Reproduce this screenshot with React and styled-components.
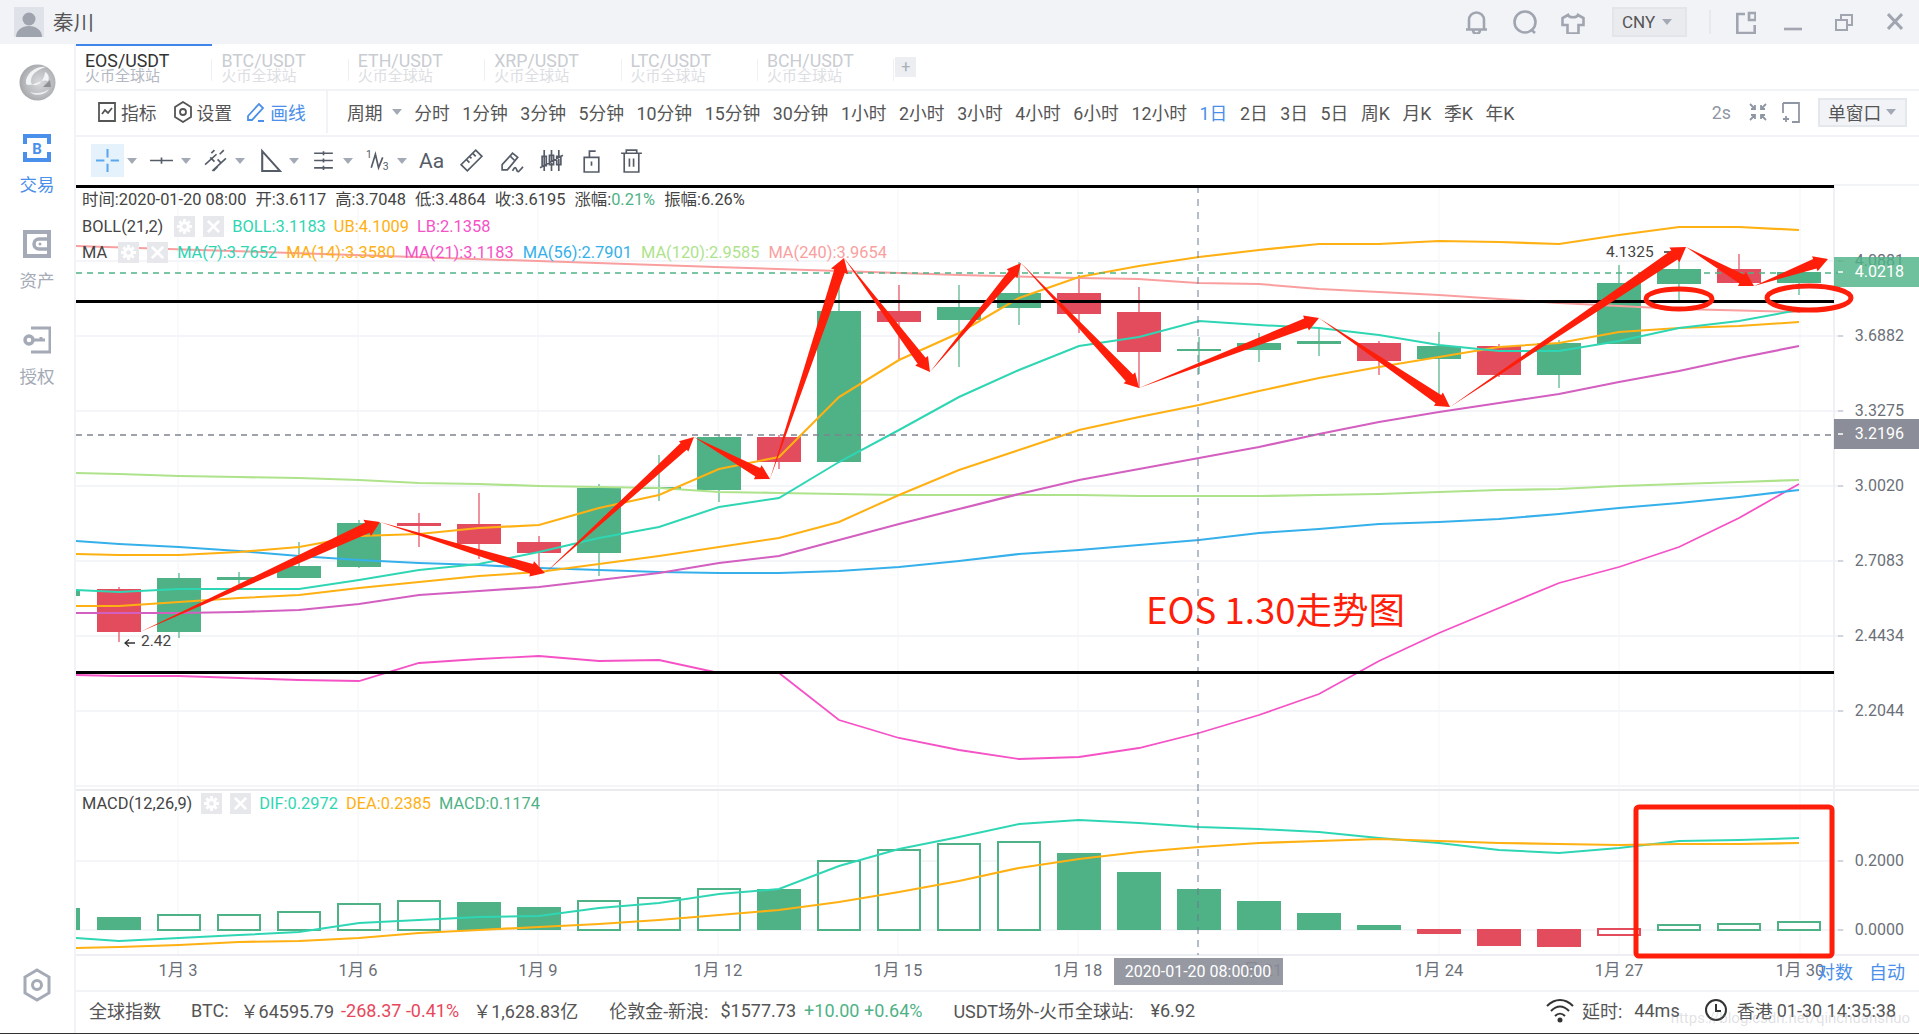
import React from 'react';
import styled, { createGlobalStyle } from 'styled-components';

const FONT = 'Roboto, "Noto Sans CJK SC", sans-serif';
const GREEN = '#4fb286';
const RED = '#e34c5d';
const TEAL = '#2fd6b4';
const ORANGE = '#ffb012';
const PINK = '#f552c6';
const PURPLE = '#d35fc0';
const SKY = '#36b0ea';
const LIME = '#aee38c';
const SALMON = '#fa9fa0';
const BLUE = '#4a8fea';
const ARROW = '#ff1e0a';

const GlobalStyle = createGlobalStyle`
  html, body { margin: 0; padding: 0; background: #fff; }
  body { font-family: ${FONT}; overflow: hidden; }
`;

const Shell = styled.div`
  width: 1919px;
  height: 1034px;
  display: flex;
  flex-direction: column;
  border-bottom: 1px solid #333;
  box-sizing: border-box;
  overflow: hidden;
  position: relative;
`;

/* title bar */
const TitleBar = styled.header`
  height: 44px;
  flex: none;
  background: #f1f3f7;
  display: flex;
  align-items: center;
  padding: 0 16px 0 14px;
  color: #a0a5b0;
`;
const Avatar = styled.div`
  width: 30px;
  height: 30px;
  background: #dfe2e8;
  display: flex;
  overflow: hidden;
`;
const UserName = styled.span`
  margin: -2px 0 0 9px;
  font-size: 20.5px;
  color: #555;
`;
const TitleRight = styled.div`
  margin-left: auto;
  display: flex;
  align-items: center;
`;
const TitleIcon = styled.svg`
  width: ${({ $w }) => $w}px;
  height: 24px;
  margin-left: ${({ $ml }) => $ml || 0}px;
  fill: none;
  stroke: currentColor;
  stroke-width: ${({ $sw }) => $sw || 2.6};
  display: block;
  flex: none;
`;
const CurrencySelect = styled.div`
  width: 75px;
  height: 30px;
  margin-left: 27px;
  box-sizing: border-box;
  background: #e9ebef;
  border: 2px solid #e3e5ea;
  display: flex;
  align-items: center;
  padding-left: 8px;
  font-size: 17px;
  color: #555;
`;
const Caret = styled.i`
  display: inline-block;
  flex: none;
  width: 0;
  height: 0;
  margin-left: ${({ $ml }) => $ml || 7}px;
  border-left: 5.5px solid transparent;
  border-right: 5.5px solid transparent;
  border-top: 6px solid #a3a9b5;
`;
const TitleDivider = styled.div`
  width: 2px;
  height: 24px;
  margin-left: 22px;
  background: #e6e8ed;
`;

/* body */
const Body = styled.div`
  flex: 1;
  min-height: 0;
  display: flex;
`;
const Sidebar = styled.nav`
  width: 74px;
  flex: none;
  border-right: 2px solid #f1f3f7;
  display: flex;
  flex-direction: column;
  align-items: center;
  padding-top: 20px;
  position: relative;
`;
const Globe = styled.svg`
  width: 37px;
  height: 37px;
  display: block;
  margin-bottom: 33px;
`;
const NavItem = styled.a`
  height: 96px;
  display: flex;
  flex-direction: column;
  align-items: center;
  font-size: 17.5px;
  line-height: 24px;
  color: ${({ $active }) => ($active ? BLUE : '#a4aab6')};
  svg {
    display: block;
    width: 28px;
    height: 28px;
    margin-bottom: 11px;
  }
`;
const SidebarFoot = styled.div`
  margin-top: auto;
  margin-bottom: 31px;
  color: #a4aab6;
  svg { display: block; width: 28px; height: 34px; }
`;

const Main = styled.main`
  flex: 1;
  min-width: 0;
  display: flex;
  flex-direction: column;
`;

/* tabs */
const TabBar = styled.div`
  height: 47px;
  flex: none;
  box-sizing: border-box;
  border-bottom: 2px solid #f1f3f7;
  display: flex;
  align-items: flex-start;
`;
const Tab = styled.div`
  width: 136.4px;
  height: 45px;
  box-sizing: border-box;
  padding: 6px 0 0 9px;
  border-top: 2px solid ${({ $active }) => ($active ? '#3f86ea' : 'transparent')};
  position: relative;
  &::after {
    content: '';
    position: absolute;
    right: 0;
    top: 13px;
    width: 1px;
    height: 22px;
    background: #f0f1f4;
  }
`;
const TabTitle = styled.div`
  font-size: 17.8px;
  line-height: 17px;
  color: ${({ $active }) => ($active ? '#333' : '#c9ccd1')};
`;
const TabSub = styled.div`
  font-size: 15px;
  line-height: 15px;
  color: ${({ $active }) => ($active ? '#b3b8c2' : '#dcdee2')};
`;
const AddTab = styled.div`
  width: 21px;
  height: 20px;
  margin: 13px 0 0 1px;
  background: #eceef2;
  color: #a9aeb8;
  font-size: 16px;
  line-height: 19px;
  text-align: center;
`;

/* period toolbar */
const Toolbar = styled.div`
  height: 46px;
  flex: none;
  box-sizing: border-box;
  border-bottom: 2px solid #f1f3f7;
  padding-bottom: 2px;
  display: flex;
  align-items: center;
  font-size: 17.8px;
  color: #555;
`;
const ToolGroup = styled.div`
  width: 252px;
  height: 100%;
  flex: none;
  box-sizing: border-box;
  border-right: 2px solid #f1f3f7;
  padding-left: 21px;
  display: flex;
  align-items: center;
`;
const ToolLabel = styled.span`
  display: flex;
  align-items: center;
  margin-right: ${({ $mr }) => $mr || 0}px;
  color: ${({ $active }) => ($active ? BLUE : '#555')};
  svg {
    width: 20px;
    height: 22px;
    margin-right: 4px;
    fill: none;
    stroke: currentColor;
    stroke-width: 1.8;
  }
`;
const Periods = styled.div`
  display: flex;
  align-items: center;
  gap: 12.55px;
  padding-left: 19px;
`;
const Period = styled.span`
  white-space: nowrap;
  color: ${({ $active }) => ($active ? BLUE : '#555')};
  display: flex;
  align-items: center;
`;
const ToolbarRight = styled.div`
  margin-left: auto;
  padding-right: 12px;
  display: flex;
  align-items: center;
  color: #8f96a3;
`;
const WindowSelect = styled.div`
  width: 89px;
  height: 29px;
  margin-left: 17px;
  box-sizing: border-box;
  background: #f1f3f7;
  border: 2px solid #e4e7ec;
  display: flex;
  align-items: center;
  padding-left: 8px;
  color: #555;
`;

/* draw toolbar */
const DrawBar = styled.div`
  height: 47px;
  flex: none;
  display: flex;
  align-items: center;
  gap: 8px;
  padding-left: 15px;
  color: #555c68;
`;
const DrawTool = styled.div`
  width: ${({ $caret }) => ($caret ? 46 : 32)}px;
  height: 33px;
  display: flex;
  align-items: center;
  font-size: 21px;
`;
const DrawIcon = styled.div`
  width: 33px;
  height: 33px;
  flex: none;
  display: flex;
  align-items: center;
  justify-content: center;
  background: ${({ $active }) => ($active ? '#e6f2fb' : 'transparent')};
  color: ${({ $active }) => ($active ? '#5aa7ee' : 'inherit')};
  svg {
    width: 25px;
    height: 25px;
    fill: none;
    stroke: currentColor;
    stroke-width: 1.6;
  }
`;

/* chart */
const ChartPane = styled.section`
  flex: 1;
  min-height: 0;
  position: relative;
`;
const ChartSvg = styled.svg`
  display: block;
  width: 1843px;
  height: 804px;
  font-family: ${FONT};
`;
const Legend = styled.div`
  position: absolute;
  left: 6px;
  top: ${({ $top }) => $top}px;
  display: flex;
  flex-direction: column;
  gap: ${({ $gap }) => $gap || 0}px;
`;
const LegendRow = styled.div`
  height: 21px;
  display: flex;
  align-items: center;
  font-size: 16.4px;
  line-height: 21px;
  color: #444;
  white-space: nowrap;
`;
const LegendValue = styled.span`
  color: ${({ $color }) => $color || 'inherit'};
  margin-left: ${({ $ml }) => $ml ?? 8}px;
`;
const LegendButton = styled.span`
  width: 21px;
  height: 21px;
  margin-left: ${({ $ml }) => $ml ?? 8}px;
  background: #e6e8ec;
  display: flex;
  align-items: center;
  justify-content: center;
  color: #fff;
  flex: none;
  svg { width: 15px; height: 15px; fill: none; stroke: currentColor; stroke-width: 3; }
`;

/* footer */
const Footer = styled.footer`
  height: 43px;
  flex: none;
  box-sizing: border-box;
  border-top: 2px solid #f1f3f7;
  display: flex;
  align-items: center;
  padding: 0 23px 5px 13px;
  font-size: 18px;
  color: #555;
  white-space: nowrap;
`;
const Quote = styled.span`
  color: ${({ $color }) => $color || 'inherit'};
  margin-left: ${({ $ml }) => $ml || 0}px;
`;
const FooterRight = styled.div`
  margin-left: auto;
  display: flex;
  align-items: center;
  svg {
    fill: none;
    stroke: #333;
    stroke-width: 2;
    display: block;
  }
`;
const Watermark = styled.div`
  position: absolute;
  right: 9px;
  bottom: 6px;
  font-size: 15px;
  color: rgba(150, 155, 165, 0.3);
  pointer-events: none;
`;

/* chart data, in page coordinates */
const candleX = i => 119 + 60 * i;
const CANDLES = [
  [RED, 587, 589, 632, 642], [GREEN, 573, 578, 632, 638], [GREEN, 572, 577, 580, 585],
  [GREEN, 542, 566, 578, 578], [GREEN, 520, 523, 567, 568], [RED, 513, 523, 526, 547],
  [RED, 493, 524, 544, 559], [RED, 536, 542, 553, 573], [GREEN, 484, 488, 553, 576],
  [GREEN, 455, 487, 489, 501], [GREEN, 435, 437, 490, 502], [RED, 435, 437, 462, 469],
  [GREEN, 273, 311, 462, 462], [RED, 285, 311, 322, 359], [GREEN, 285, 307, 320, 367],
  [GREEN, 262, 293, 308, 325], [RED, 275, 293, 314, 333], [RED, 287, 312, 352, 388],
  [GREEN, 337, 349, 351, 374], [GREEN, 333, 343, 350, 362], [GREEN, 328, 341, 344, 356],
  [RED, 341, 343, 361, 375], [GREEN, 332, 346, 359, 400], [RED, 344, 346, 375, 377],
  [GREEN, 340, 343, 375, 388], [GREEN, 265, 283, 344, 344], [GREEN, 248, 269, 284, 300],
  [RED, 254, 269, 283, 283], [GREEN, 272, 272, 283, 295],
];

const series = (ys, start) => [...(start !== undefined ? [[76, start]] : []), ...ys.map((y, i) => [candleX(i), y])];

const LINES = [
  { color: PINK, width: 1.8, pts: series([676, 676, 678, 680, 681, 663, 659, 656, 661, 660, 673, 673, 720, 738, 750, 759, 757, 748, 733, 715, 694, 661, 633, 608, 583, 567, 547, 518, 484], 675) },
  { color: LIME, width: 2.2, pts: series([474, 476, 477, 478, 480, 483, 484, 486, 487, 488, 492, 493, 494, 495, 495, 495, 495, 496, 496, 496, 495, 494, 492, 490, 489, 486, 484, 482, 480], 473) },
  { color: SALMON, width: 2, pts: [[76, 246], [200, 250], [415, 257], [597, 263], [716, 267], [839, 271], [960, 275], [1079, 278], [1138, 279], [1198, 283], [1259, 284], [1319, 289], [1439, 295], [1559, 303], [1680, 309], [1800, 312]] },
  { color: SKY, width: 2.2, pts: series([544, 547, 551, 556, 560, 563, 565, 568, 570, 572, 573, 573, 571, 567, 561, 554, 550, 545, 540, 533, 529, 524, 522, 519, 514, 508, 503, 497, 490], 541) },
  { color: PURPLE, width: 2.2, pts: series([613, 613, 612, 610, 604, 595, 591, 587, 580, 573, 563, 556, 540, 524, 509, 494, 480, 469, 458, 447, 434, 422, 412, 403, 394, 382, 371, 358, 346], 613) },
  { color: ORANGE, width: 2, pts: series([606, 602, 598, 595, 588, 582, 576, 572, 564, 556, 547, 538, 522, 495, 470, 450, 430, 417, 405, 391, 378, 367, 357, 347, 343, 332, 328, 326, 322], 606) },
  { color: ORANGE, width: 2.2, pts: series([555, 555, 552, 547, 536, 534, 528, 525, 508, 495, 469, 457, 397, 360, 333, 298, 277, 266, 257, 250, 244, 244, 241, 242, 244, 235, 227, 227, 230], 554) },
  { color: TEAL, width: 2, pts: series([592, 589, 589, 589, 580, 570, 564, 552, 538, 527, 507, 498, 462, 430, 397, 370, 346, 337, 321, 325, 328, 335, 345, 351, 351, 341, 328, 321, 310], 590) },
  { color: TEAL, width: 2, pts: series([941, 938, 935, 932, 923, 920, 917, 916, 908, 903, 894, 889, 866, 849, 837, 824, 820, 823, 827, 829, 832, 838, 843, 850, 853, 848, 841, 840, 838], 938) },
  { color: ORANGE, width: 2.2, pts: series([947, 945, 942, 941, 938, 933, 930, 927, 924, 920, 915, 910, 902, 892, 881, 868, 859, 852, 847, 843, 841, 839, 841, 843, 844, 845, 844, 844, 843], 948) },
];

// [top or bottom y, solid]; everything is measured from the zero line at y=930
const MACD = [
  [917, 1], [915, 0], [915, 0], [912, 0], [904, 0], [901, 0], [902, 1], [907, 1], [901, 0], [898, 0],
  [889, 0], [889, 1], [861, 0], [850, 0], [844, 0], [842, 0], [853, 1], [872, 1], [889, 1], [901, 1],
  [913, 1], [925, 1], [934, 1], [946, 1], [947, 1], [935, 0], [925, 0], [924, 0], [922, 0],
];

const PRICE_TICKS = [[4.0881, 261], [3.6882, 336], [3.3275, 411], [3.002, 486], [2.7083, 561], [2.4434, 636], [2.2044, 711]];
const GRID_X = [178, 358, 538, 718, 898, 1078, 1258, 1439, 1619, 1800];
const TIME_LABELS = ['1月 3', '1月 6', '1月 9', '1月 12', '1月 15', '1月 18', '1月 21', '1月 24', '1月 27', '1月 30'];

// the hand drawn arrows of the annotation: thin at the start, thick at the head
const ZIGZAG = [
  [140, 632, 380, 522, 11], [380, 522, 545, 573, 10], [545, 573, 694, 437, 9], [694, 437, 770, 479, 10],
  [770, 479, 844, 258, 11], [844, 258, 930, 372, 10], [930, 372, 1021, 263, 9], [1021, 263, 1139, 388, 10],
  [1139, 388, 1319, 318, 10], [1319, 318, 1450, 407, 10], [1450, 407, 1686, 247, 11], [1686, 247, 1754, 286, 10],
  [1754, 286, 1828, 259, 10],
];

const arrowPoints = ([x1, y1, x2, y2, w]) => {
  const len = Math.hypot(x2 - x1, y2 - y1);
  const [dx, dy] = [(x2 - x1) / len, (y2 - y1) / len];
  const [nx, ny] = [-dy, dx];
  const bx = x2 - dx * 14;
  const by = y2 - dy * 14;
  return [
    [x1, y1],
    [bx + (nx * w) / 2, by + (ny * w) / 2],
    [bx + nx * (w - 2), by + ny * (w - 2)],
    [x2, y2],
    [bx - nx * (w - 2), by - ny * (w - 2)],
    [bx - (nx * w) / 2, by - (ny * w) / 2],
  ].map(p => p.map(n => n.toFixed(1)).join(',')).join(' ');
};

const polyline = pts => pts.map(p => p.join(',')).join(' ');

const AxisLabel = ({ y, children, fill = '#6b7078' }) => (
  <g>
    <line x1="1838" x2="1843" y1={y} y2={y} stroke={fill === '#fff' ? '#fff' : '#c7cbd2'} strokeWidth="1.5" />
    <text x="1904" y={y + 5} fontSize="16" fill={fill} textAnchor="end">{children}</text>
  </g>
);

const Chart = () => (
  <ChartSvg viewBox="76 184 1843 804">
    {/* grid */}
    {PRICE_TICKS.map(([, y]) => <line key={y} x1="76" x2="1844" y1={y} y2={y} stroke="#f3f5f9" strokeWidth="2" />)}
    <line x1="76" x2="1844" y1="861" y2="861" stroke="#f3f5f9" strokeWidth="2" />
    <line x1="76" x2="1844" y1="930" y2="930" stroke="#f3f5f9" strokeWidth="2" />
    {GRID_X.map(x => <line key={x} x1={x} x2={x} y1="186" y2="955" stroke="#f3f5f9" strokeWidth="1" />)}
    <line x1="76" x2="1919" y1="786" y2="786" stroke="#f3f5f9" strokeWidth="2" />
    <line x1="76" x2="1919" y1="790" y2="790" stroke="#e9ebef" strokeWidth="2" />
    <line x1="76" x2="1919" y1="955" y2="955" stroke="#eceef3" strokeWidth="2" />
    <line x1="1834" x2="1834" y1="184" y2="955" stroke="#eef0f4" strokeWidth="2" />
    <line x1="1835" x2="1919" y1="185" y2="185" stroke="#f1f3f7" strokeWidth="2" />

    {/* macd bars */}
    <rect x="76" y="908" width="4" height="22" fill={GREEN} />
    {MACD.map(([edge, solid], i) => {
      const color = edge > 930 ? RED : GREEN;
      const y = Math.min(edge, 929);
      const h = Math.max(edge, 930) - y;
      return (
        <rect
          key={i}
          x={candleX(i) - (solid ? 22 : 21)}
          y={y}
          width={solid ? 44 : 42}
          height={h}
          fill={solid ? color : '#fff'}
          stroke={solid ? 'none' : color}
          strokeWidth="2"
        />
      );
    })}

    {/* candles */}
    <rect x="76" y="590" width="4" height="6" fill={GREEN} />
    {CANDLES.map(([color, top, open, close, bottom], i) => (
      <g key={i}>
        <line x1={candleX(i)} x2={candleX(i)} y1={top} y2={bottom} stroke={color} strokeWidth="1.2" />
        <rect x={candleX(i) - 22} y={open} width="44" height={close - open} fill={color} />
      </g>
    ))}

    {/* indicators */}
    {LINES.map((l, i) => <polyline key={i} points={polyline(l.pts)} fill="none" stroke={l.color} strokeWidth={l.width} />)}

    {/* price and crosshair rules */}
    <line x1="76" x2="1838" y1="273" y2="273" stroke={GREEN} strokeWidth="1.6" strokeDasharray="6 5" />
    <line x1="76" x2="1838" y1="435" y2="435" stroke="#7d8490" strokeWidth="1.6" strokeDasharray="6 5" />
    <line x1="1198" x2="1198" y1="186" y2="955" stroke="#6b7a90" strokeWidth="1" strokeDasharray="7 6" />

    {/* price axis */}
    {PRICE_TICKS.map(([v, y]) => <AxisLabel key={y} y={y}>{v.toFixed(4)}</AxisLabel>)}
    <AxisLabel y={861}>0.2000</AxisLabel>
    <AxisLabel y={930}>0.0000</AxisLabel>
    <rect x="1834" y="257" width="85" height="30" fill={GREEN} opacity="0.82" />
    <AxisLabel y={272} fill="#fff">4.0218</AxisLabel>
    <rect x="1834" y="419" width="85" height="30" fill="#8b8d98" />
    <AxisLabel y={434} fill="#fff">3.2196</AxisLabel>

    {/* time axis */}
    {GRID_X.map((x, i) => <text key={x} x={x} y="976" fontSize="16.5" fill="#6b7078" textAnchor="middle">{TIME_LABELS[i]}</text>)}
    <rect x="1114" y="958" width="169" height="27" fill="#8b8d98" opacity="0.9" />
    <text x="1198" y="977" fontSize="16" fill="#fff" textAnchor="middle">2020-01-20 08:00:00</text>
    <text x="1817" y="979" fontSize="18" fill={BLUE}>对数</text>
    <text x="1869" y="979" fontSize="18" fill={BLUE}>自动</text>

    {/* high and low marks */}
    <text x="1606" y="257" fontSize="15.5" fill="#444">4.1325</text>
    <path d="M1664 252h15m-4-3.5l4 3.5-4 3.5" fill="none" stroke="#333" strokeWidth="1.3" />
    <text x="141" y="646" fontSize="15.5" fill="#444">2.42</text>
    <path d="M135 643h-10m4-3.5l-4 3.5 4 3.5" fill="none" stroke="#333" strokeWidth="1.3" />

    {/* annotation drawn over the screenshot */}
    <rect x="76" y="185" width="1758" height="3" fill="#000" />
    <rect x="76" y="300" width="1758" height="3" fill="#000" />
    <rect x="76" y="671" width="1758" height="3" fill="#000" />
    {ZIGZAG.map((a, i) => <polygon key={i} points={arrowPoints(a)} fill={ARROW} />)}
    <ellipse cx="1679" cy="299" rx="33" ry="10" fill="none" stroke={ARROW} strokeWidth="5" />
    <ellipse cx="1809" cy="298" rx="42" ry="12" fill="none" stroke={ARROW} strokeWidth="5" />
    <rect x="1636" y="807" width="196" height="149" rx="3" fill="none" stroke={ARROW} strokeWidth="5" />
    <text x="1146" y="624" fontSize="36.5" fill={ARROW} fontFamily='"Noto Sans CJK SC", sans-serif'>EOS 1.30走势图</text>
  </ChartSvg>
);

const GearGlyph = () => (
  <svg viewBox="0 0 16 16"><circle cx="8" cy="8" r="4" /><path d="M8 0v3M8 13v3M0 8h3M13 8h3M2.5 2.5l2 2M11.5 11.5l2 2M2.5 13.5l2-2M11.5 4.5l2-2" /></svg>
);
const CrossGlyph = () => (
  <svg viewBox="0 0 16 16"><path d="M2 2l12 12M14 2L2 14" /></svg>
);

const Indicator = ({ name, first, gap, items }) => (
  <LegendRow>
    {name}
    <LegendButton $ml={first}><GearGlyph /></LegendButton>
    <LegendButton><CrossGlyph /></LegendButton>
    {items.map(([text, color]) => <LegendValue key={text} $color={color} $ml={gap}>{text}</LegendValue>)}
  </LegendRow>
);

const PERIODS = ['分时', '1分钟', '3分钟', '5分钟', '10分钟', '15分钟', '30分钟', '1小时', '2小时', '3小时', '4小时', '6小时', '12小时', '1日', '2日', '3日', '5日', '周K', '月K', '季K', '年K'];
const TABS = ['EOS/USDT', 'BTC/USDT', 'ETH/USDT', 'XRP/USDT', 'LTC/USDT', 'BCH/USDT'];

const DRAW_TOOLS = [
  { caret: true, active: true, icon: <path d="M12 1v8M12 15v8M1 12h8M15 12h8" strokeWidth="2" /> },
  { caret: true, icon: <path d="M1 12h22M12 9v6" /> },
  { caret: true, icon: <path d="M2 16L13 6M9 22L22 10M11 2l-3 3M14 18l-4 4M7 9l4 4M14 11l3 3M20 2l-4 4" /> },
  { caret: true, icon: <path d="M5 3v19h17z" strokeWidth="2" /> },
  { caret: true, icon: <path d="M3 5h18M3 12h18M3 19h18M12 3v4M12 10v4M12 17v4" /> },
  { caret: true, icon: <><path d="M6 19l4-13 3 13 4-10" /><text x="1" y="10" fontSize="10" fill="currentColor" stroke="none">1</text><text x="17" y="21" fontSize="10" fill="currentColor" stroke="none">3</text></> },
  { text: 'Aa' },
  { icon: <path d="M16 2l6 6L8 22l-6-6zM7 11l3 3M10 8l2 2M13 5l3 3" /> },
  { icon: <><path d="M3 21l0-5L13 5l5 4L8 21z" /><path d="M11 8l4 4" /><path d="M13 22c2-4 3-4 4-1s2 2 6-3" /></> },
  { icon: <path d="M5 2v20M12 2v20M19 2v20M3 8h4v9H3zM10 7h4v9h-4zM17 8h4v8h-4zM1 19L23 7" /> },
  { icon: <path d="M5 9h14v14H5zM10 9V3h6M12 13v4" /> },
  { icon: <path d="M2 5h20M7 5V2h10v3M5 5v18h14V5M10 10v8M14 10v8" /> },
];

export default function App() {
  return (
    <Shell>
      <GlobalStyle />
      <TitleBar>
        <Avatar>
          <svg viewBox="0 0 30 30" width="30" height="30"><circle cx="15" cy="12" r="6.5" fill="#9ea3ad" /><path d="M2 30c0-7 6-11 13-11s13 4 13 11z" fill="#9ea3ad" /></svg>
        </Avatar>
        <UserName>秦川</UserName>
        <TitleRight>
          <TitleIcon viewBox="0 0 23 24" $w={23}><path d="M4 19V10a7.5 7.5 0 0 1 15 0v9M1 19.5h21M8 20c0 5 7 5 7 0" /></TitleIcon>
          <TitleIcon viewBox="0 0 24 24" $w={24} $ml={25}><circle cx="12" cy="12" r="10.5" /><path d="M18 19.5l4 3.5" /></TitleIcon>
          <TitleIcon viewBox="0 0 24 24" $w={24} $ml={24}><path d="M7 5L1.5 8v7h5v8.5h11V15h5V8L17 5c-1 3-9 3-10 0z" /></TitleIcon>
          <CurrencySelect>CNY<Caret /></CurrencySelect>
          <TitleDivider />
          <TitleIcon viewBox="0 0 20 24" $w={20} $ml={25}><path d="M9 4H1.3v19h17.4v-8M13 3h6.5v7H13z" /></TitleIcon>
          <TitleIcon viewBox="0 0 18 24" $w={18} $ml={28}><path d="M0 19h18" /></TitleIcon>
          <TitleIcon viewBox="0 0 18 24" $w={18} $ml={33} $sw={2}><path d="M1 10h11v10H1zM6 10V5h11v10h-5" /></TitleIcon>
          <TitleIcon viewBox="0 0 16 24" $w={16} $ml={34} $sw={3}><path d="M1 4l14 15M15 4L1 19" /></TitleIcon>
        </TitleRight>
      </TitleBar>

      <Body>
        <Sidebar>
          <Globe viewBox="0 0 37 37">
            <defs>
              <radialGradient id="globeFill" cx="55%" cy="50%" r="60%">
                <stop offset="0%" stopColor="#d9dadc" />
                <stop offset="65%" stopColor="#b7b9bc" />
                <stop offset="100%" stopColor="#9fa1a5" />
              </radialGradient>
            </defs>
            <circle cx="18.5" cy="18.5" r="18" fill="url(#globeFill)" />
            <path d="M7 16C10 6 20 2 27 3c-7 2-14 6-15 13-1 5 5 7 9 3 3-3 5-8 5-11 3 1 5 6 3 9-6-3-17 7-22 3z" fill="#f2f3f4" />
            <path d="M24 23l7-7 1 7z" fill="#8d9094" />
            <path d="M11 28c6 2 14 1 19-3-3 6-14 8-19 3z" fill="#eceded" />
          </Globe>
          <NavItem $active>
            <svg viewBox="0 0 28 28">
              <path d="M2 10V2h24v8M26 18v8H2v-8" fill="none" stroke="currentColor" strokeWidth="4" />
              <text x="14" y="19.5" fontSize="15" fontWeight="700" textAnchor="middle" fill="currentColor">B</text>
            </svg>
            交易
          </NavItem>
          <NavItem>
            <svg viewBox="0 0 28 28">
              <path d="M2 2h24v24H2z" fill="none" stroke="currentColor" strokeWidth="4" />
              <path d="M24 9H16a5 5 0 0 0 0 10h8" fill="none" stroke="currentColor" strokeWidth="3.5" />
              <circle cx="17" cy="14" r="1.5" fill="currentColor" />
            </svg>
            资产
          </NavItem>
          <NavItem>
            <svg viewBox="0 0 28 28">
              <path d="M8 2h19v24H8" fill="none" stroke="currentColor" strokeWidth="3" />
              <circle cx="6" cy="14" r="4" fill="none" stroke="currentColor" strokeWidth="3.5" />
              <path d="M10 14h12M18 14v-3" fill="none" stroke="currentColor" strokeWidth="3" />
            </svg>
            授权
          </NavItem>
          <SidebarFoot>
            <svg viewBox="0 0 28 34">
              <path d="M14 2l12 7v16l-12 7-12-7V9z" fill="none" stroke="currentColor" strokeWidth="3" />
              <circle cx="14" cy="17" r="4.5" fill="none" stroke="currentColor" strokeWidth="3" />
            </svg>
          </SidebarFoot>
        </Sidebar>

        <Main>
          <TabBar>
            {TABS.map((t, i) => (
              <Tab key={t} $active={i === 0}>
                <TabTitle $active={i === 0}>{t}</TabTitle>
                <TabSub $active={i === 0}>火币全球站</TabSub>
              </Tab>
            ))}
            <AddTab>+</AddTab>
          </TabBar>

          <Toolbar>
            <ToolGroup>
              <ToolLabel $mr={16}>
                <svg viewBox="0 0 20 22"><path d="M2 2h16v18H2zM5 13l3-4 3 3 4-5" /></svg>指标
              </ToolLabel>
              <ToolLabel $mr={14}>
                <svg viewBox="0 0 20 22"><path d="M10 1l8 5v10l-8 5-8-5V6z" /><circle cx="10" cy="11" r="3" /></svg>设置
              </ToolLabel>
              <ToolLabel $active>
                <svg viewBox="0 0 20 22"><path d="M2 15L13 3l4 4L6 19H2zM12 20h6" /></svg>画线
              </ToolLabel>
            </ToolGroup>
            <Periods>
              <Period>周期<Caret $ml={9} /></Period>
              {PERIODS.map(p => <Period key={p} $active={p === '1日'}>{p}</Period>)}
            </Periods>
            <ToolbarRight>
              <span>2s</span>
              <svg viewBox="0 0 20 20" width="20" height="20" style={{ marginLeft: 17 }} fill="none" stroke="currentColor" strokeWidth="1.8">
                <path d="M2 2l5 5M7 3v4H3M18 2l-5 5M13 3v4h4M2 18l5-5M7 17v-4H3M18 18l-5-5M13 17v-4h4" />
              </svg>
              <svg viewBox="0 0 20 22" width="20" height="22" style={{ marginLeft: 13 }} fill="none" stroke="currentColor" strokeWidth="1.8">
                <path d="M2 2h16v19h-7M2 2v10M2 18h6M5 15v6" />
              </svg>
              <WindowSelect>单窗口<Caret $ml={5} /></WindowSelect>
            </ToolbarRight>
          </Toolbar>

          <DrawBar>
            {DRAW_TOOLS.map((tool, i) => (
              <DrawTool key={i} $caret={tool.caret}>
                <DrawIcon $active={tool.active}>
                  {tool.text || <svg viewBox="0 0 24 24">{tool.icon}</svg>}
                </DrawIcon>
                {tool.caret && <Caret $ml={3} />}
              </DrawTool>
            ))}
          </DrawBar>

          <ChartPane>
            <Chart />
            <Legend $top={5} $gap={5.5}>
              <LegendRow>
                时间:2020-01-20 08:00
                <LegendValue $ml={9}>开:3.6117</LegendValue>
                <LegendValue $ml={9}>高:3.7048</LegendValue>
                <LegendValue $ml={9}>低:3.4864</LegendValue>
                <LegendValue $ml={9}>收:3.6195</LegendValue>
                <LegendValue $ml={9}>涨幅:<LegendValue $color={GREEN} $ml={0}>0.21%</LegendValue></LegendValue>
                <LegendValue $ml={9}>振幅:6.26%</LegendValue>
              </LegendRow>
              <Indicator name="BOLL(21,2)" first={11} gap={8} items={[['BOLL:3.1183', TEAL], ['UB:4.1009', ORANGE], ['LB:2.1358', PINK]]} />
              <Indicator name="MA" first={11} gap={9} items={[['MA(7):3.7652', TEAL], ['MA(14):3.3580', ORANGE], ['MA(21):3.1183', PINK], ['MA(56):2.7901', SKY], ['MA(120):2.9585', LIME], ['MA(240):3.9654', SALMON]]} />
            </Legend>
            <Legend $top={609}>
              <Indicator name="MACD(12,26,9)" first={9} gap={8} items={[['DIF:0.2972', TEAL], ['DEA:0.2385', ORANGE], ['MACD:0.1174', GREEN]]} />
            </Legend>
          </ChartPane>

          <Footer>
            <Quote>全球指数</Quote>
            <Quote $ml={30}>BTC:</Quote>
            <Quote $ml={12}>￥64595.79</Quote>
            <Quote $ml={7} $color="#e8475b">-268.37 -0.41%</Quote>
            <Quote $ml={14}>￥1,628.83亿</Quote>
            <Quote $ml={31}>伦敦金-新浪:</Quote>
            <Quote $ml={12}>$1577.73</Quote>
            <Quote $ml={8} $color={GREEN}>+10.00 +0.64%</Quote>
            <Quote $ml={31}>USDT场外-火币全球站:</Quote>
            <Quote $ml={17}>¥6.92</Quote>
            <FooterRight>
              <svg viewBox="0 0 30 26" width="30" height="26"><path d="M2 9c8-8 18-8 26 0M6 14c6-6 12-6 18 0M10 19c3-3 7-3 10 0" /><circle cx="15" cy="23" r="1.5" fill="#333" /></svg>
              <Quote $ml={7}>延时:</Quote>
              <Quote $ml={12}>44ms</Quote>
              <svg viewBox="0 0 24 24" width="24" height="24" style={{ marginLeft: 24 }}><circle cx="12" cy="12" r="10" /><path d="M12 6v7h5" /></svg>
              <Quote $ml={9}>香港</Quote>
              <Quote $ml={4}>01-30 14:35:38</Quote>
            </FooterRight>
          </Footer>
        </Main>
      </Body>
      <Watermark>https://blog.csdn.net/qinchuanshuo</Watermark>
    </Shell>
  );
}
